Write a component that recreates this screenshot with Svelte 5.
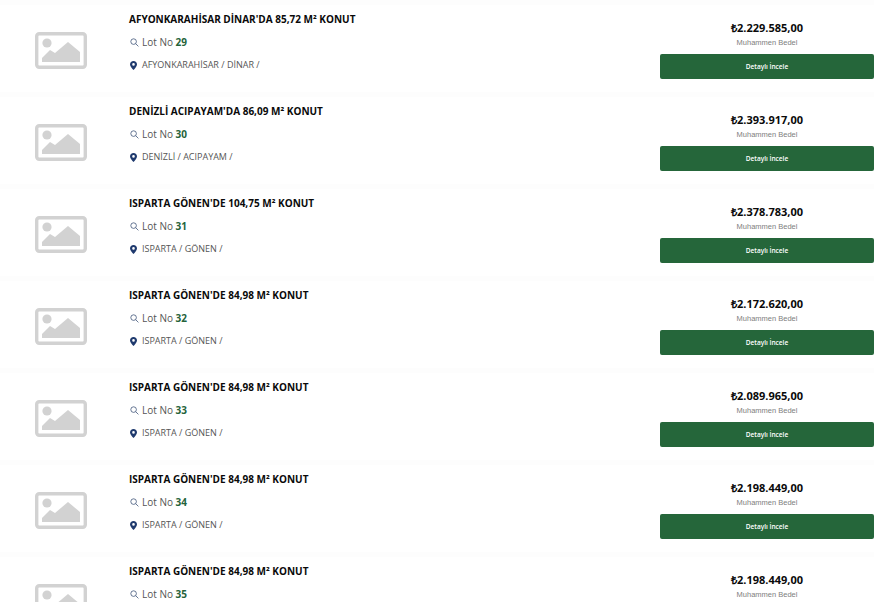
<script>
  const lots = [
    { title: "AFYONKARAHİSAR DİNAR'DA 85,72 M² KONUT", no: 29, place: "AFYONKARAHİSAR / DİNAR /", price: "2.229.585,00" },
    { title: "DENİZLİ ACIPAYAM'DA 86,09 M² KONUT", no: 30, place: "DENİZLİ / ACIPAYAM /", price: "2.393.917,00" },
    { title: "ISPARTA GÖNEN'DE 104,75 M² KONUT", no: 31, place: "ISPARTA / GÖNEN /", price: "2.378.783,00" },
    { title: "ISPARTA GÖNEN'DE 84,98 M² KONUT", no: 32, place: "ISPARTA / GÖNEN /", price: "2.172.620,00" },
    { title: "ISPARTA GÖNEN'DE 84,98 M² KONUT", no: 33, place: "ISPARTA / GÖNEN /", price: "2.089.965,00" },
    { title: "ISPARTA GÖNEN'DE 84,98 M² KONUT", no: 34, place: "ISPARTA / GÖNEN /", price: "2.198.449,00" },
    { title: "ISPARTA GÖNEN'DE 84,98 M² KONUT", no: 35, place: "ISPARTA / GÖNEN /", price: "2.198.449,00" }
  ];
</script>

<div class="list">
  {#each lots as lot}
    <div class="row">
      <div class="thumb">
        <svg width="52" height="37" viewBox="0 0 52 37">
          <rect x="1.7" y="1.7" width="48.6" height="33.6" rx="2.5" fill="none" stroke="#d2d2d2" stroke-width="3.4" />
          <circle cx="12" cy="11" r="4.6" fill="#d2d2d2" />
          <path d="M7 30 L7 26 L15 18 L20 21 L33 10 L45 20 L45 30 Z" fill="#d2d2d2" />
        </svg>
      </div>
      <div class="info">
        <div class="title">{lot.title}</div>
        <div class="lot">
          <svg width="9" height="9" viewBox="0 0 9 9">
            <circle cx="3.6" cy="3.6" r="2.8" fill="none" stroke="#3f5478" stroke-width="0.8" />
            <path d="M5.7 5.7 L8.4 8.4" stroke="#3f5478" stroke-width="0.8" />
          </svg>
          <span>Lot No <b>{lot.no}</b></span>
        </div>
        <div class="place">
          <svg width="7" height="9" viewBox="0 0 7 9">
            <path fill-rule="evenodd" d="M3.5 0 C5.5 0 7 1.5 7 3.4 C7 5.6 4.6 7.6 3.5 9 C2.4 7.6 0 5.6 0 3.4 C0 1.5 1.5 0 3.5 0 Z M3.5 2.1 A1.3 1.3 0 1 0 3.5 4.7 A1.3 1.3 0 1 0 3.5 2.1 Z" fill="#1f3a6e" />
          </svg>
          <span>{lot.place}</span>
        </div>
      </div>
      <div class="side">
        <div class="price">₺{lot.price}</div>
        <div class="label">Muhammen Bedel</div>
        <button class="detail">Detaylı İncele</button>
      </div>
    </div>
  {/each}
</div>

<style>
  :global(body) {
    background: #fff;
    overflow: hidden;
    height: 602px;
  }

  .list {
    font-family: "Open Sans", sans-serif;
    padding-top: 5px;
    background: #fdfdfd;
    display: flex;
    flex-direction: column;
    gap: 5px;
  }

  .row {
    display: flex;
    height: 87px;
    background: #fff;
    flex-shrink: 0;
  }

  .thumb {
    width: 129px;
    padding: 27px 0 0 35px;
    box-sizing: border-box;
  }

  .info {
    flex: 1;
    padding-top: 7px;
  }

  .title {
    font-size: 10px;
    font-weight: 700;
    color: #0a0a0a;
    line-height: 14px;
    height: 14px;
  }

  .lot {
    display: flex;
    align-items: center;
    gap: 3px;
    font-size: 10px;
    color: #555;
    margin-top: 9px;
    padding-left: 1px;
    line-height: 14px;
  }

  .lot b {
    color: #25633a;
    font-weight: 700;
  }

  .place {
    display: flex;
    align-items: center;
    gap: 5px;
    font-size: 9px;
    color: #555;
    margin-top: 9px;
    padding-left: 1px;
    line-height: 14px;
  }

  .side {
    width: 214px;
    display: flex;
    flex-direction: column;
    align-items: center;
    padding-top: 15px;
  }

  .price {
    font-size: 11px;
    font-weight: 700;
    color: #0a0a0a;
    line-height: 16px;
  }

  .label {
    font-size: 7.5px;
    color: #808080;
    line-height: 10px;
    margin-top: 2px;
    font-family: "Liberation Sans", sans-serif;
  }

  .detail {
    width: 100%;
    height: 25px;
    margin-top: 6px;
    border: 0;
    border-radius: 2px;
    background: #25663a;
    color: #fff;
    font-family: "Open Sans", sans-serif;
    font-size: 6.5px;
    font-weight: 600;
    padding: 0;
  }
</style>
